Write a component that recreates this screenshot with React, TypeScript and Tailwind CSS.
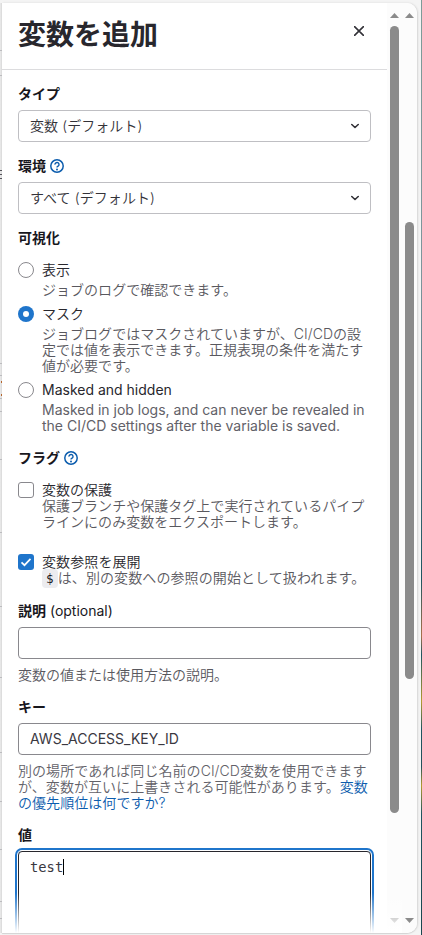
import type { ReactNode } from "react";

const fade = "absolute bottom-[2px] left-[2px] h-10 w-[400px] bg-gradient-to-b from-white/0 to-white";

function Help() {
  return (
    <svg className="ml-1 size-[14px] shrink-0 text-[#0b5cad]" viewBox="0 0 16 16" fill="none">
      <circle cx="8" cy="8" r="7.1" stroke="currentColor" strokeWidth="1.7" />
      <path d="M5.700 6.400a2.300 2.300 0 1 1 3.600 1.800C8.400 8.700 8 8.900 8 9.700" stroke="currentColor" strokeWidth="1.600" />
      <circle cx="8" cy="11.900" r="1.100" fill="currentColor" />
    </svg>
  );
}

function Label({ children, className = "" }: { children: ReactNode; className?: string }) {
  return <div className={`flex h-4 items-center font-semibold whitespace-pre text-[#18171d] ${className}`}>{children}</div>;
}

function Select({ children }: { children: ReactNode }) {
  return (
    <div className="mt-2 flex h-8 items-center justify-between rounded border border-[#bfbfc3] pr-[11px] pl-[11px]">
      <span className="font-[350] tracking-[0.08px] text-[#333238]">{children}</span>
      <svg className="size-2" viewBox="0 0 8 8" fill="none">
        <path d="M0.800 2.500 4 5.500l3.200-3" stroke="#333238" strokeWidth="1.600" strokeLinecap="round" strokeLinejoin="round" />
      </svg>
    </div>
  );
}

function Option({ title, control, children, className = "", gap = "mt-1", text = "font-[350] tracking-[0.03px]" }: { title: string; control: ReactNode; children: ReactNode; className?: string; gap?: string; text?: string }) {
  return (
    <div className={`flex gap-2 ${className}`}>
      {control}
      <div className={`leading-4 whitespace-nowrap ${text}`}>
        <div className="text-[#28272d]">{title}</div>
        <div className={`text-[#59585e] ${gap}`}>{children}</div>
      </div>
    </div>
  );
}

const Radio = ({ checked = false }: { checked?: boolean }) =>
  checked ? (
    <span className="flex size-4 shrink-0 items-center justify-center rounded-full bg-[#1f75cb]">
      <span className="size-1.5 rounded-full bg-white" />
    </span>
  ) : (
    <span className="size-4 shrink-0 rounded-full border border-[#89888d] bg-white" />
  );

const Check = ({ checked = false }: { checked?: boolean }) =>
  checked ? (
    <span className="size-4 shrink-0 rounded-[3px] bg-[#1f75cb]">
      <svg viewBox="0 0 16 16" fill="none">
        <path d="m3.500 8.300 3 2.900 6-6.400" stroke="white" strokeWidth="1.700" />
      </svg>
    </span>
  ) : (
    <span className="size-4 shrink-0 rounded-[3px] border border-[#89888d] bg-white" />
  );

function Scrollbar({ thumb }: { thumb: string }) {
  return (
    <div className="flex w-[15px] flex-col items-center bg-[#fcfcfc] pt-[10px] pb-[10px]">
      <svg className="h-[5px] w-[9px] shrink-0" viewBox="0 0 9 5"><path d="M4.500 0 9 5H0z" fill="#8b8b8b" /></svg>
      <div className={`w-[9px] shrink-0 rounded-full bg-[#8b8b8b] ${thumb}`} />
      <svg className="mt-auto h-[5px] w-[9px] shrink-0" viewBox="0 0 9 5"><path d="M0 0h9L4.500 5z" fill="#8b8b8b" /></svg>
    </div>
  );
}

function PageEdge() {
  const gaps = [47, 24, 287, 11, 22, 12, 47, 72, 73, 70, 74, 48, 47, 51, 16];
  return (
    <div className="relative h-[930px] w-[2px] shrink-0 overflow-hidden bg-gradient-to-r from-[#ececec] to-[#d8d8d8]">
      {gaps.map((gap, i) => (
        <div key={i} className="border-b border-[#bcbcbf]" style={{ height: gap + 1 }} />
      ))}
      <div className="absolute top-[167px] left-0 h-[9px] w-[2px] border-y border-[#55545a]">
        <div className="mt-[3px] h-px bg-[#55545a]" />
      </div>
      <div className="absolute top-[378px] left-[1px] h-[15px] w-px border-y-2 border-dotted border-[#b5652c]" />
    </div>
  );
}

export default function App() {
  return (
    <div className="relative flex h-[935px] w-[422px] overflow-hidden bg-[#f4f4f4] pt-[3px] font-['Inter','Noto_Sans_CJK_JP',sans-serif] text-[14px] leading-4 text-[#3a383f]" lang="ja">
      <PageEdge />
      <div className="flex h-[930px] w-[415px] shrink-0 overflow-hidden rounded-r-[10px] bg-white shadow-[1px_0_2px_0_#d4d4d4,0_1px_1px_0_#d4d4d4]">
        <main className="w-[385px] shrink-0">
          <header className="flex h-[67px] justify-between border-b border-[#dcdcde] px-4">
            <h1 className="mt-[12px] text-[28px] leading-10 font-bold text-[#28272d]">変数を追加</h1>
            <svg className="mt-[23px] mr-[7px] size-[10px]" viewBox="0 0 10 10"><path d="m0 0 10 10M10 0 0 10" stroke="#333238" strokeWidth="1.600" /></svg>
          </header>
          <div className="flex flex-col px-4">
            <Label className="mt-4">タイプ</Label>
            <Select>変数 (デフォルト)</Select>
            <Label className="mt-4">環境<Help /></Label>
            <Select>すべて (デフォルト)</Select>
            <Label className="mt-4">可視化</Label>
            <Option className="mt-4" title="表示" control={<Radio />}>ジョブのログで確認できます。</Option>
            <Option className="mt-2" title="マスク" control={<Radio checked />}>
              ジョブログではマスクされていますが、CI/CDの設<br />定では値を表示できます。正規表現の条件を満たす<br />値が必要です。
            </Option>
            <Option className="mt-2" title="Masked and hidden" text="font-normal" control={<Radio />}>
              <span className="text-[#626168]">Masked in job logs, and can never be revealed in<br />the CI/CD settings after the variable is saved.</span>
            </Option>
            <Label className="mt-4">フラグ<Help /></Label>
            <Option className="mt-4" title="変数の保護" gap="mt-0" control={<Check />}>
              保護ブランチや保護タグ上で実行されているパイプ<br />ラインにのみ変数をエクスポートします。
            </Option>
            <Option className="mt-6" title="変数参照を展開" gap="mt-0" text="font-[350] tracking-[0.1px]" control={<Check checked />}>
              <code className="rounded bg-[#ececef] px-1 py-0.5 font-['DejaVu_Sans_Mono',monospace] text-[12.600px] text-[#18171d]">$</code>は、別の変数への参照の開始として扱われます。
            </Option>
            <Label className="mt-4">説明<span className="font-normal"> (optional)</span></Label>
            <div className="mt-2 h-8 rounded border border-[#89888d]" />
            <p className="mt-2 font-[350] text-[#59585e]">変数の値または使用方法の説明。</p>
            <Label className="mt-4">キー</Label>
            <div className="mt-2 flex h-8 items-center rounded border border-[#89888d] px-[11px]">AWS_ACCESS_KEY_ID</div>
            <p className="mt-2 font-[350] tracking-[0.06px] whitespace-nowrap text-[#626168]">
              別の場所であれば同じ名前のCI/CD変数を使用できます<br />が、変数が互いに上書きされる可能性があります。<a className="text-[#0b5cad]">変数<br />の優先順位は何ですか?</a>
            </p>
            <Label className="mt-4">値</Label>
            <div className="mt-2 h-[100px] rounded border border-[#28272d] px-[11px] pt-[7px] font-['DejaVu_Sans_Mono',monospace] text-[13.800px] shadow-[0_0_0_1px_#fff,0_0_0_3px_#1f75cb]">
              <span className="border-r border-black">test</span>
            </div>
          </div>
        </main>
        <Scrollbar thumb="mt-2 h-[787px]" />
        <Scrollbar thumb="mt-[204px] h-[457px]" />
      </div>
      <div className={fade} />
      <div className="ml-auto -mt-[3px] h-[935px] w-px shrink-0 bg-linear-[180deg,#7d9b98_0%,#7d949b_30%,#44717c_48%,#1f5560_62%,#a8704a_68%,#1f5560_70%,#b39a30_75%,#1f5560_78%,#24505a_82%,#b39a30_84%,#1f5560_87%,#1b454e_100%]" />
    </div>
  );
}
